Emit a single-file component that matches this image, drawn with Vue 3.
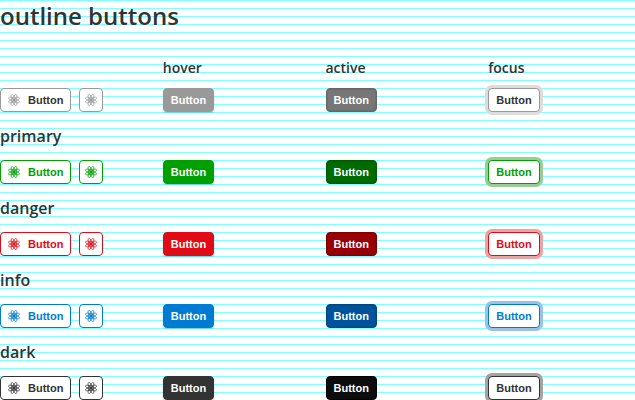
<script setup>
const columns = ['hover', 'active', 'focus']
const angles = [22.5, 67.5, 112.5, 157.5]
const variants = [
  { name: 'default', title: '' },
  { name: 'primary', title: 'primary' },
  { name: 'danger', title: 'danger' },
  { name: 'info', title: 'info' },
  { name: 'dark', title: 'dark' },
]
</script>

<template>
  <main class="page">
    <h1>outline buttons</h1>
    <section v-for="v in variants" :key="v.name" class="group" :class="v.name">
      <h2 v-if="v.title">{{ v.title }}</h2>
      <div v-else class="row states">
        <span></span>
        <h3 v-for="c in columns" :key="c">{{ c }}</h3>
      </div>
      <div class="row">
        <div class="pair">
          <button type="button" class="btn">
            <svg class="icon" viewBox="0 0 24 24" aria-hidden="true">
              <ellipse
                v-for="a in angles" :key="a" class="orbit"
                cx="12" cy="12" rx="11.8" ry="3.8" :transform="`rotate(${a} 12 12)`"
              />
              <circle cx="12" cy="12" r="2.4" fill="currentColor" />
            </svg>
            <span>Button</span>
          </button>
          <button type="button" class="btn square" :aria-label="v.name">
            <svg class="icon" viewBox="0 0 24 24" aria-hidden="true">
              <ellipse
                v-for="a in angles" :key="a" class="orbit"
                cx="12" cy="12" rx="11.8" ry="3.8" :transform="`rotate(${a} 12 12)`"
              />
              <circle cx="12" cy="12" r="2.4" fill="currentColor" />
            </svg>
          </button>
        </div>
        <div v-for="c in columns" :key="c">
          <button type="button" class="btn" :class="c">Button</button>
        </div>
      </div>
    </section>
  </main>
</template>

<style>
body {
  background: #fff repeating-linear-gradient(to bottom, #7fffff 0 1px, transparent 1px 8px);
  overflow: hidden;
}
</style>

<style scoped>
.page {
  color: #333;
  font-family: "Open Sans", "Noto Sans", sans-serif;
}
h1,
h2,
h3 {
  margin: 0;
  font-weight: 600;
}
h1 {
  font-size: 24px;
  line-height: 32px;
  padding-bottom: 24px;
}
h2 {
  font-size: 16px;
  line-height: 24px;
  padding: 12px 0;
}
h3 {
  font-size: 14px;
  line-height: 24px;
}
.row {
  display: grid;
  grid-template-columns: repeat(4, minmax(0, 1fr));
  column-gap: 16px;
}
.states {
  padding-bottom: 8px;
}
.pair {
  display: flex;
  gap: 8px;
}
.btn {
  display: flex;
  align-items: center;
  gap: 8px;
  box-sizing: border-box;
  height: 24px;
  padding: 0 7px;
  border: 1px solid var(--color);
  border-radius: 4px;
  background: #fff;
  color: var(--text, var(--color));
  font: bold 11px/16px "Liberation Sans", Arial, sans-serif;
}
.square {
  width: 24px;
  padding: 0 5px;
}
.icon {
  flex: none;
  width: 12px;
  height: 12px;
  color: var(--color);
  overflow: visible;
}
.orbit {
  fill: none;
  stroke: currentColor;
  stroke-width: 1.4;
}
.hover {
  background: var(--color);
  color: #fff;
  box-shadow: 0 1px 2px rgba(0, 0, 0, 0.2);
}
.active {
  background: var(--pressed);
  border-color: var(--edge);
  color: #fff;
  box-shadow: inset 0 0 2px rgba(0, 0, 0, 0.25);
}
.focus {
  box-shadow: 0 0 0 3px var(--ring);
}
.default {
  --color: #999;
  --text: #333;
  --pressed: #777;
  --edge: #666;
  --ring: #ddd;
}
.primary {
  --color: #00a000;
  --pressed: #006b00;
  --edge: #005a00;
  --ring: #99cc99;
}
.danger {
  --color: #e00b14;
  --pressed: #990005;
  --edge: #800000;
  --ring: #e8a5a5;
}
.info {
  --color: #007bd3;
  --pressed: #00539b;
  --edge: #004680;
  --ring: #99c2e5;
}
.dark {
  --color: #333;
  --pressed: #0d0d0d;
  --edge: #000;
  --ring: #a3a3a3;
}
</style>
